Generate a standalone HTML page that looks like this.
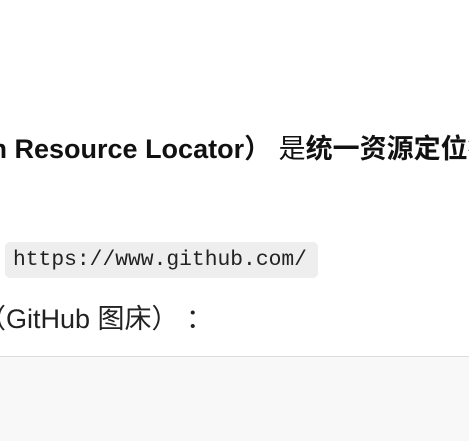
<!DOCTYPE html>
<html><head><meta charset="utf-8"><style>
body{margin:0;width:469px;height:440px;overflow:hidden;background:#fff;position:relative;font-family:"Liberation Sans","Noto Sans CJK SC",sans-serif;color:#111}
.a{position:absolute;white-space:nowrap}
</style></head><body>
<div class="a" style="left:-17px;top:132px;font-size:27px;font-weight:bold;line-height:34px">m Resource Locator）&nbsp;<span style="font-weight:normal">是</span>统一资源定位符</div>
<div class="a" style="left:5px;top:242px;width:313px;height:36px;background:#eeeeee;border-radius:5px"></div>
<div class="a" style="left:13px;top:245px;font-family:'Liberation Mono','DejaVu Sans Mono',monospace;font-size:21.3px;line-height:30px;color:#222">https://www.github.com/</div>
<div class="a" style="left:-21px;top:302px;font-size:27px;line-height:34px;color:#222">（GitHub 图床）&nbsp;：</div>
<div class="a" style="left:0;top:356px;width:469px;height:84px;background:#f8f8f8;border-top:1px solid #ddd"></div>
</body></html>
